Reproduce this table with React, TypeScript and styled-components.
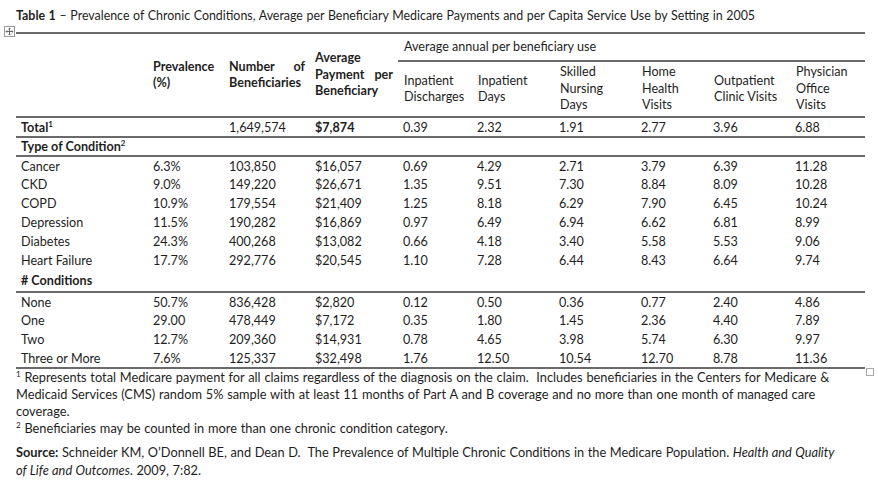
import styled, { createGlobalStyle } from "styled-components";

const GlobalStyle = createGlobalStyle`
  html, body {
    margin: 0;
    background: #ffffff;
  }
  body {
    font-family: Lato, "Open Sans", sans-serif;
    color: #1e1e1e;
  }
`;

type Row = [string, string, string, string, string, string, string, string, string, string];

const conditions: Row[] = [
  ["Cancer", "6.3%", "103,850", "$16,057", "0.69", "4.29", "2.71", "3.79", "6.39", "11.28"],
  ["CKD", "9.0%", "149,220", "$26,671", "1.35", "9.51", "7.30", "8.84", "8.09", "10.28"],
  ["COPD", "10.9%", "179,554", "$21,409", "1.25", "8.18", "6.29", "7.90", "6.45", "10.24"],
  ["Depression", "11.5%", "190,282", "$16,869", "0.97", "6.49", "6.94", "6.62", "6.81", "8.99"],
  ["Diabetes", "24.3%", "400,268", "$13,082", "0.66", "4.18", "3.40", "5.58", "5.53", "9.06"],
  ["Heart Failure", "17.7%", "292,776", "$20,545", "1.10", "7.28", "6.44", "8.43", "6.64", "9.74"],
];

const counts: Row[] = [
  ["None", "50.7%", "836,428", "$2,820", "0.12", "0.50", "0.36", "0.77", "2.40", "4.86"],
  ["One", "29.00", "478,449", "$7,172", "0.35", "1.80", "1.45", "2.36", "4.40", "7.89"],
  ["Two", "12.7%", "209,360", "$14,931", "0.78", "4.65", "3.98", "5.74", "6.30", "9.97"],
  ["Three or More", "7.6%", "125,337", "$32,498", "1.76", "12.50", "10.54", "12.70", "8.78", "11.36"],
];

const colWidths = [132, 76, 86, 88, 74, 82, 82, 72, 82, 75];

export default function App() {
  return (
    <Page>
      <GlobalStyle />
      <Title>
        <b>Table 1</b> – Prevalence of Chronic Conditions, Average per Beneficiary Medicare Payments and per Capita
        Service Use by Setting in 2005
      </Title>
      <TableWrap>
        <MoveHandle>
          <svg width="11" height="11" viewBox="0 0 11 11">
            <rect x="0.5" y="0.5" width="10" height="10" fill="#fff" stroke="#9a9a9a" />
            <path d="M5.5 2v7M2 5.5h7" stroke="#666" strokeWidth="1" />
            <path d="M4.3 3.2L5.5 2l1.2 1.2M4.3 7.8L5.5 9l1.2-1.2M3.2 4.3L2 5.5l1.2 1.2M7.8 4.3L9 5.5l-1.2 1.2" stroke="#666" fill="none" strokeWidth="0.8" />
          </svg>
        </MoveHandle>
        <ResizeHandle />
        <Table>
          <colgroup>
            {colWidths.map((w, i) => (
              <col key={i} style={{ width: w }} />
            ))}
          </colgroup>
          <thead>
            <tr>
              <HeadCell rowSpan={2} />
              <HeadCell rowSpan={2} $bold>Prevalence (%)</HeadCell>
              <HeadCell rowSpan={2} $bold $justify>Number of Beneficiaries</HeadCell>
              <HeadCell rowSpan={2} $bold $justify>Average Payment per Beneficiary</HeadCell>
              <GroupCell colSpan={6}>Average annual per beneficiary use</GroupCell>
            </tr>
            <tr>
              <SubHeadCell>Inpatient Discharges</SubHeadCell>
              <SubHeadCell>Inpatient Days</SubHeadCell>
              <SubHeadCell>Skilled Nursing Days</SubHeadCell>
              <SubHeadCell>Home Health Visits</SubHeadCell>
              <SubHeadCell>Outpatient Clinic Visits</SubHeadCell>
              <SubHeadCell>Physician Office Visits</SubHeadCell>
            </tr>
          </thead>
          <tbody>
            <DataRow $ruled $h={20}>
              <Cell $bold>Total<Sup>1</Sup></Cell>
              <Cell />
              <Cell>1,649,574</Cell>
              <Cell $bold>$7,874</Cell>
              <Cell>0.39</Cell>
              <Cell>2.32</Cell>
              <Cell>1.91</Cell>
              <Cell>2.77</Cell>
              <Cell>3.96</Cell>
              <Cell>6.88</Cell>
            </DataRow>
            <DataRow $ruled>
              <Cell $bold colSpan={10}>Type of Condition<Sup>2</Sup></Cell>
            </DataRow>
            {conditions.map((r) => (
              <DataRow key={r[0]}>
                {r.map((v, i) => (
                  <Cell key={i}>{v}</Cell>
                ))}
              </DataRow>
            ))}
            <DataRow $ruled $h={22}>
              <Cell $bold colSpan={10}># Conditions</Cell>
            </DataRow>
            {counts.map((r, idx) => (
              <DataRow key={r[0]} $ruled={idx === counts.length - 1}>
                {r.map((v, i) => (
                  <Cell key={i}>{v}</Cell>
                ))}
              </DataRow>
            ))}
          </tbody>
        </Table>
      </TableWrap>
      <Note>
        <Sup>1</Sup> Represents total Medicare payment for all claims regardless of the diagnosis on the claim.&nbsp;
        Includes beneficiaries in the Centers for Medicare &amp; Medicaid Services (CMS) random 5% sample with at least
        11 months of Part A and B coverage and no more than one month of managed care coverage.
      </Note>
      <Note>
        <Sup>2</Sup> Beneficiaries may be counted in more than one chronic condition category.
      </Note>
      <Source>
        <b>Source:</b> Schneider KM, O’Donnell BE, and Dean D.&nbsp; The Prevalence of Multiple Chronic Conditions in
        the Medicare Population. <i>Health and Quality of Life and Outcomes</i>. 2009, 7:82.
      </Source>
    </Page>
  );
}

const Page = styled.div`
  width: 849px;
  padding: 7px 13px 0 16px;
  font-size: 12.6px;
`;

const Title = styled.div`
  font-size: 12.4px;
  word-spacing: 0.5px;
  line-height: 17px;
  height: 18px;
  white-space: nowrap;
  b {
    font-weight: 700;
  }
`;

const TableWrap = styled.div`
  position: relative;
  padding-top: 7px;
`;

const MoveHandle = styled.div`
  position: absolute;
  left: -12px;
  top: 1px;
  width: 11px;
  height: 11px;
  line-height: 0;
`;

const ResizeHandle = styled.div`
  position: absolute;
  right: -9px;
  bottom: -7px;
  width: 6px;
  height: 6px;
  border: 1px solid #a8a8a8;
  background: #fff;
`;

const Table = styled.table`
  width: 849px;
  border-collapse: collapse;
  table-layout: fixed;
  border-top: 2px solid #6a6a6a;
`;

const HeadCell = styled.th<{ $bold?: boolean; $justify?: boolean }>`
  font-weight: ${(p) => (p.$bold ? 700 : 400)};
  text-align: ${(p) => (p.$justify ? "justify" : "left")};
  text-align-last: left;
  vertical-align: middle;
  padding: 0 5px;
  line-height: 16.5px;
  border-bottom: 2px solid #6a6a6a;
`;

const GroupCell = styled.th`
  font-weight: 400;
  text-align: left;
  height: 26px;
  padding: 0 6px;
  line-height: 16px;
  vertical-align: middle;
  border-bottom: 2px solid #6a6a6a;
`;

const SubHeadCell = styled.th`
  font-weight: 400;
  text-align: left;
  height: 54px;
  padding: 0 6px;
  line-height: 16.5px;
  vertical-align: middle;
  border-bottom: 2px solid #6a6a6a;
`;

const DataRow = styled.tr<{ $ruled?: boolean; $h?: number }>`
  height: ${(p) => p.$h ?? 19}px;
  border-bottom: ${(p) => (p.$ruled ? "2px solid #6a6a6a" : "none")};
`;

const Cell = styled.td<{ $bold?: boolean }>`
  font-weight: ${(p) => (p.$bold ? 700 : 400)};
  padding: 0 5px;
  line-height: 17px;
  white-space: nowrap;
`;

const Sup = styled.sup`
  font-size: 8px;
  line-height: 0;
  vertical-align: 5px;
`;

const Note = styled.p`
  width: 840px;
  margin: 0;
  font-size: 12.8px;
  word-spacing: 0.5px;
  line-height: 17px;
`;

const Source = styled.p`
  width: 828px;
  margin: 7px 0 0;
  font-size: 12.8px;
  word-spacing: 0.3px;
  line-height: 17.5px;
`;
